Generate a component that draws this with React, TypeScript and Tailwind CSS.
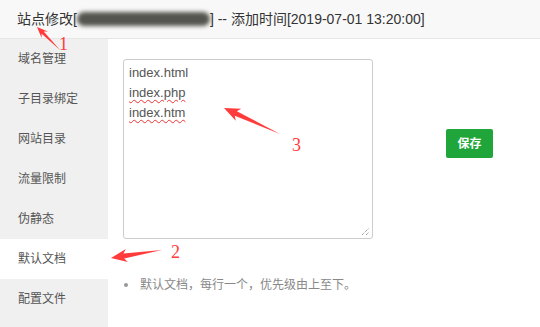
import React from 'react'

const menu = ['域名管理', '子目录绑定', '网站目录', '流量限制', '伪静态', '默认文档', '配置文件']
const ACTIVE = '默认文档'

type Pt = [number, number]

// tapered annotation arrow: tip -> tail
function arrowPoints(tip: Pt, tail: Pt, head = 14, headW = 11, shaftW = 4) {
  const dx = tail[0] - tip[0]
  const dy = tail[1] - tip[1]
  const len = Math.hypot(dx, dy)
  const ux = dx / len
  const uy = dy / len
  const nx = -uy
  const ny = ux
  const b: Pt = [tip[0] + ux * head, tip[1] + uy * head]
  const neck: Pt = [tip[0] + ux * (head - 3), tip[1] + uy * (head - 3)]
  const pts: Pt[] = [
    tip,
    [b[0] + nx * headW / 2, b[1] + ny * headW / 2],
    [neck[0] + nx * shaftW / 2, neck[1] + ny * shaftW / 2],
    tail,
    [neck[0] - nx * shaftW / 2, neck[1] - ny * shaftW / 2],
    [b[0] - nx * headW / 2, b[1] - ny * headW / 2],
  ]
  return pts.map((p) => p.join(',')).join(' ')
}

function Annotations() {
  return (
    <svg className="absolute inset-0 pointer-events-none" width="540" height="327" viewBox="0 0 540 327">
      <polygon points={arrowPoints([37, 27], [60, 50], 11, 9, 3)} fill="#ff3b3b" />
      <polygon points={arrowPoints([224, 108], [280, 134], 16, 13, 5)} fill="#ff3b3b" />
      <polygon points={arrowPoints([111, 258], [162, 250], 16, 13, 5)} fill="#ff3b3b" />
      <g fill="#ff3b3b" fontFamily="'Liberation Serif', serif" fontSize="18">
        <text x="59" y="50">1</text>
        <text x="171" y="258">2</text>
        <text x="292" y="151">3</text>
      </g>
    </svg>
  )
}

export default function App() {
  return (
    <div
      className="relative w-[540px] h-[327px] overflow-hidden bg-white text-[#333]"
      style={{ fontFamily: "'Liberation Sans', 'Noto Sans CJK SC', sans-serif" }}
    >
      <div className="h-[39px] bg-[#f8f8f8] border-b border-[#e6e6e6] flex items-center pl-[17px] text-[14px] text-[#333] whitespace-nowrap">
        <span>站点修改[</span>
        <span className="inline-block w-[133px] h-[14px] rounded-full bg-[#55554f] blur-[2px]" />
        <span>] -- 添加时间[2019-07-01 13:20:00]</span>
      </div>
      <div className="flex h-[288px]">
        <ul className="w-[108px] bg-[#f0f0f0] shrink-0">
          {menu.map((m) => (
            <li
              key={m}
              className={`h-10 leading-10 pl-[18px] text-[12px] text-[#555] ${m === ACTIVE ? 'bg-white' : ''}`}
            >
              {m}
            </li>
          ))}
        </ul>
        <div className="pl-[15px] pt-[20px]">
          <div className="flex items-start">
            <div className="relative w-[250px] h-[180px] border border-[#ccc] rounded-[3px] pl-[5px] pt-[3px] text-[13px] leading-[20px] text-[#555]">
              <div>index.html</div>
              <div>
                <span className="underline decoration-wavy decoration-[#e33] decoration-1 underline-offset-[2px]">index.php</span>
              </div>
              <div>
                <span className="underline decoration-wavy decoration-[#e33] decoration-1 underline-offset-[2px]">index.htm</span>
              </div>
              <svg className="absolute right-[2px] bottom-[2px]" width="9" height="9" viewBox="0 0 9 9">
                <path d="M1 8 L8 1 M5 8 L8 5" stroke="#777" strokeWidth="1" strokeDasharray="1 1" />
              </svg>
            </div>
            <button className="ml-[73px] mt-[70px] w-[47px] h-[29px] rounded-[2px] bg-[#20a53a] text-white text-[12px] font-bold">
              保存
            </button>
          </div>
          <ul className="mt-[36px]">
            <li className="flex items-center h-5 text-[12px] text-[#888]">
              <span className="ml-[1px] w-[4px] h-[4px] rounded-full bg-[#999]" />
              <span className="ml-[12px]">默认文档，每行一个，优先级由上至下。</span>
            </li>
          </ul>
        </div>
      </div>
      <Annotations />
    </div>
  )
}
